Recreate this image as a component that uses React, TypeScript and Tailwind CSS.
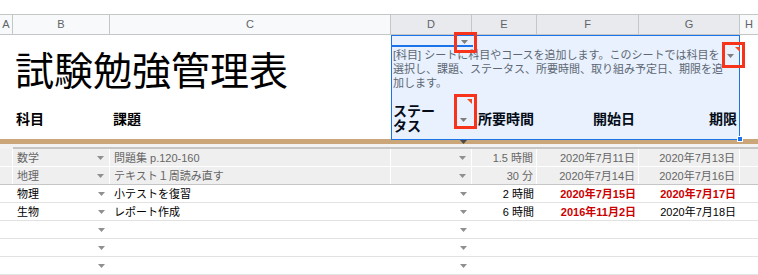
import React from "react";

const GRID = "grid grid-cols-[13px_97px_281px_81px_65px_102px_101px_18px]";

function Arrow({ color = "#8f8f8f" }: { color?: string }) {
  return (
    <svg width="7" height="4" viewBox="0 0 7 4" className="shrink-0">
      <polygon points="0,0 7,0 3.5,4" fill={color} />
    </svg>
  );
}

type Row = {
  b: string;
  c: string;
  e: string;
  f: string;
  g: string;
  fRed?: boolean;
  gRed?: boolean;
  gray?: boolean;
};

const rows: Row[] = [
  { b: "数学", c: "問題集 p.120-160", e: "1.5 時間", f: "2020年7月11日", g: "2020年7月13日", gray: true },
  { b: "地理", c: "テキスト１周読み直す", e: "30 分", f: "2020年7月14日", g: "2020年7月16日", gray: true },
  { b: "物理", c: "小テストを復習", e: "2 時間", f: "2020年7月15日", g: "2020年7月17日", fRed: true, gRed: true },
  { b: "生物", c: "レポート作成", e: "6 時間", f: "2016年11月2日", g: "2020年7月18日", fRed: true },
  { b: "", c: "", e: "", f: "", g: "" },
  { b: "", c: "", e: "", f: "", g: "" },
  { b: "", c: "", e: "", f: "", g: "" },
];

export default function App() {
  const letters = ["A", "B", "C", "D", "E", "F", "G", "H"];
  return (
    <div className="relative w-[758px] h-[275px] overflow-hidden bg-white font-['Liberation_Sans','Noto_Sans_CJK_JP',sans-serif] text-black">
      <div className="h-[14px]" />
      {/* column header */}
      <div className={`${GRID} h-[21px] border-y border-[#c4c7c5]`}>
        {letters.map((l, i) => (
          <div
            key={l}
            className={`flex items-center justify-center text-[11px] text-[#5f6368] ${
              i < 7 ? "border-r border-[#c4c7c5]" : ""
            } ${i >= 3 && i <= 6 ? "bg-[#e8eaed]" : "bg-[#f8f9fa]"}`}
          >
            {l}
          </div>
        ))}
      </div>

      {/* top frozen area */}
      <div className={`${GRID} grid-rows-[12px_48px_44px] h-[104px]`}>
        <div className="col-start-2 col-span-2 row-start-1 row-span-2 pl-[2px] pt-[14px] text-[39px] leading-[39px] whitespace-nowrap font-['Noto_Sans_CJK_JP',sans-serif]">
          試験勉強管理表
        </div>
        <div className="col-start-4 col-span-4 row-start-2 pl-[2px] pt-[1px] pr-[20px] text-[11px] leading-[14px] text-[#666666] whitespace-nowrap">
          [科目] シートに科目やコースを追加します。このシートでは科目を
          <br />
          選択し、課題、ステータス、所要時間、取り組み予定日、期限を追
          <br />
          加します。
        </div>
        <div className="col-start-2 row-start-3 flex items-center pt-[4px] pl-[3px] text-[14px] leading-[16px] font-bold">
          科目
        </div>
        <div className="col-start-3 row-start-3 flex items-center pt-[4px] pl-[3px] text-[14px] leading-[16px] font-bold">
          課題
        </div>
        <div className="col-start-4 row-start-3 flex items-center pt-[4px] pl-[2px] text-[14px] leading-[15px] font-bold">
          ステー
          <br />
          タス
        </div>
        <div className="col-start-5 row-start-3 flex items-center justify-end pt-[4px] pr-[3px] text-[14px] leading-[16px] font-bold whitespace-nowrap">
          所要時間
        </div>
        <div className="col-start-6 row-start-3 flex items-center justify-end pt-[4px] pr-[4px] text-[14px] leading-[16px] font-bold">
          開始日
        </div>
        <div className="col-start-7 row-start-3 flex items-center justify-end pt-[4px] pr-[3px] text-[14px] leading-[16px] font-bold">
          期限
        </div>
      </div>

      {/* tan band */}
      <div className="h-[5px] bg-[#caa679]" />
      {/* frozen divider */}
      <div className="h-[3px] bg-[#f3f3f3]" />
      <div className={`${GRID} h-[2px]`}>
        <div className="bg-[#f3f3f3]" />
        <div className="col-span-7 bg-[#c6c6c6]" />
      </div>

      {/* data rows */}
      {rows.map((r, idx) => {
        const gray = !!r.gray;
        const txt = gray ? "text-[#666666]" : "text-black";
        const sep = gray ? "border-r border-white" : "";
        const bottom = gray
          ? idx === 1
            ? "border-b border-[#c6c6c6]"
            : "border-b border-white"
          : "border-b border-[#e2e2e2]";
        return (
          <div
            key={idx}
            className={`${GRID} h-[18px] text-[11px] leading-[14px] ${bottom} ${
              gray ? "bg-[#efefef]" : "bg-white"
            } ${txt}`}
          >
            <div className={sep} />
            <div className={`flex items-center justify-between pl-[4px] pr-[5px] ${sep}`}>
              <span>{r.b}</span>
              <Arrow />
            </div>
            <div className={`flex items-center pl-[4px] whitespace-nowrap ${sep}`}>{r.c}</div>
            <div className={`flex items-center justify-end pr-[5px] ${sep}`}>
              <Arrow />
            </div>
            <div className={`flex items-center justify-end pr-[3px] whitespace-nowrap ${sep}`}>{r.e}</div>
            <div
              className={`flex items-center justify-end pr-[3px] whitespace-nowrap ${sep} ${
                r.fRed ? "text-[#cc0000] font-bold" : ""
              }`}
            >
              {r.f}
            </div>
            <div
              className={`flex items-center justify-end pr-[4px] whitespace-nowrap ${sep} ${
                r.gRed ? "text-[#cc0000] font-bold" : ""
              }`}
            >
              {r.g}
            </div>
            <div />
          </div>
        );
      })}

      {/* selection overlay */}
      <div className="absolute left-[391px] top-[35px] w-[349px] h-[105px] border border-[#1a73e8] bg-[#1a73e8]/10 pointer-events-none" />
      <div className="absolute left-[391px] top-[45px] w-[82px] h-[2px] bg-[#1a73e8]" />
      <div className="absolute left-[737px] top-[136px] w-[6px] h-[6px] bg-[#1a73e8] border border-white" />

      {/* in-cell chips */}
      <div className="absolute left-[461px] top-[40px] flex">
        <Arrow color="#7d7d7d" />
      </div>
      <div className="absolute left-[727px] top-[54px] flex">
        <Arrow color="#7d7d7d" />
      </div>
      <div className="absolute left-[460px] top-[118px] flex">
        <Arrow color="#7d7d7d" />
      </div>
      <div className="absolute left-[460px] top-[140px] flex">
        <Arrow color="#4a4a4a" />
      </div>
      <svg className="absolute left-[735px] top-[47px]" width="5" height="5" viewBox="0 0 5 5">
        <polygon points="0,0 5,0 5,5" fill="#ee4a24" />
      </svg>
      <svg className="absolute left-[467px] top-[99px]" width="5" height="5" viewBox="0 0 5 5">
        <polygon points="0,0 5,0 5,5" fill="#ee4a24" />
      </svg>

      {/* red annotation boxes */}
      <div className="absolute left-[454px] top-[32px] w-[23px] h-[21px] border-[3px] border-[#f8331b]" />
      <div className="absolute left-[722px] top-[42px] w-[23px] h-[26px] border-[3px] border-[#f8331b]" />
      <div className="absolute left-[454px] top-[94px] w-[23px] h-[35px] border-[3px] border-[#f8331b]" />
    </div>
  );
}
